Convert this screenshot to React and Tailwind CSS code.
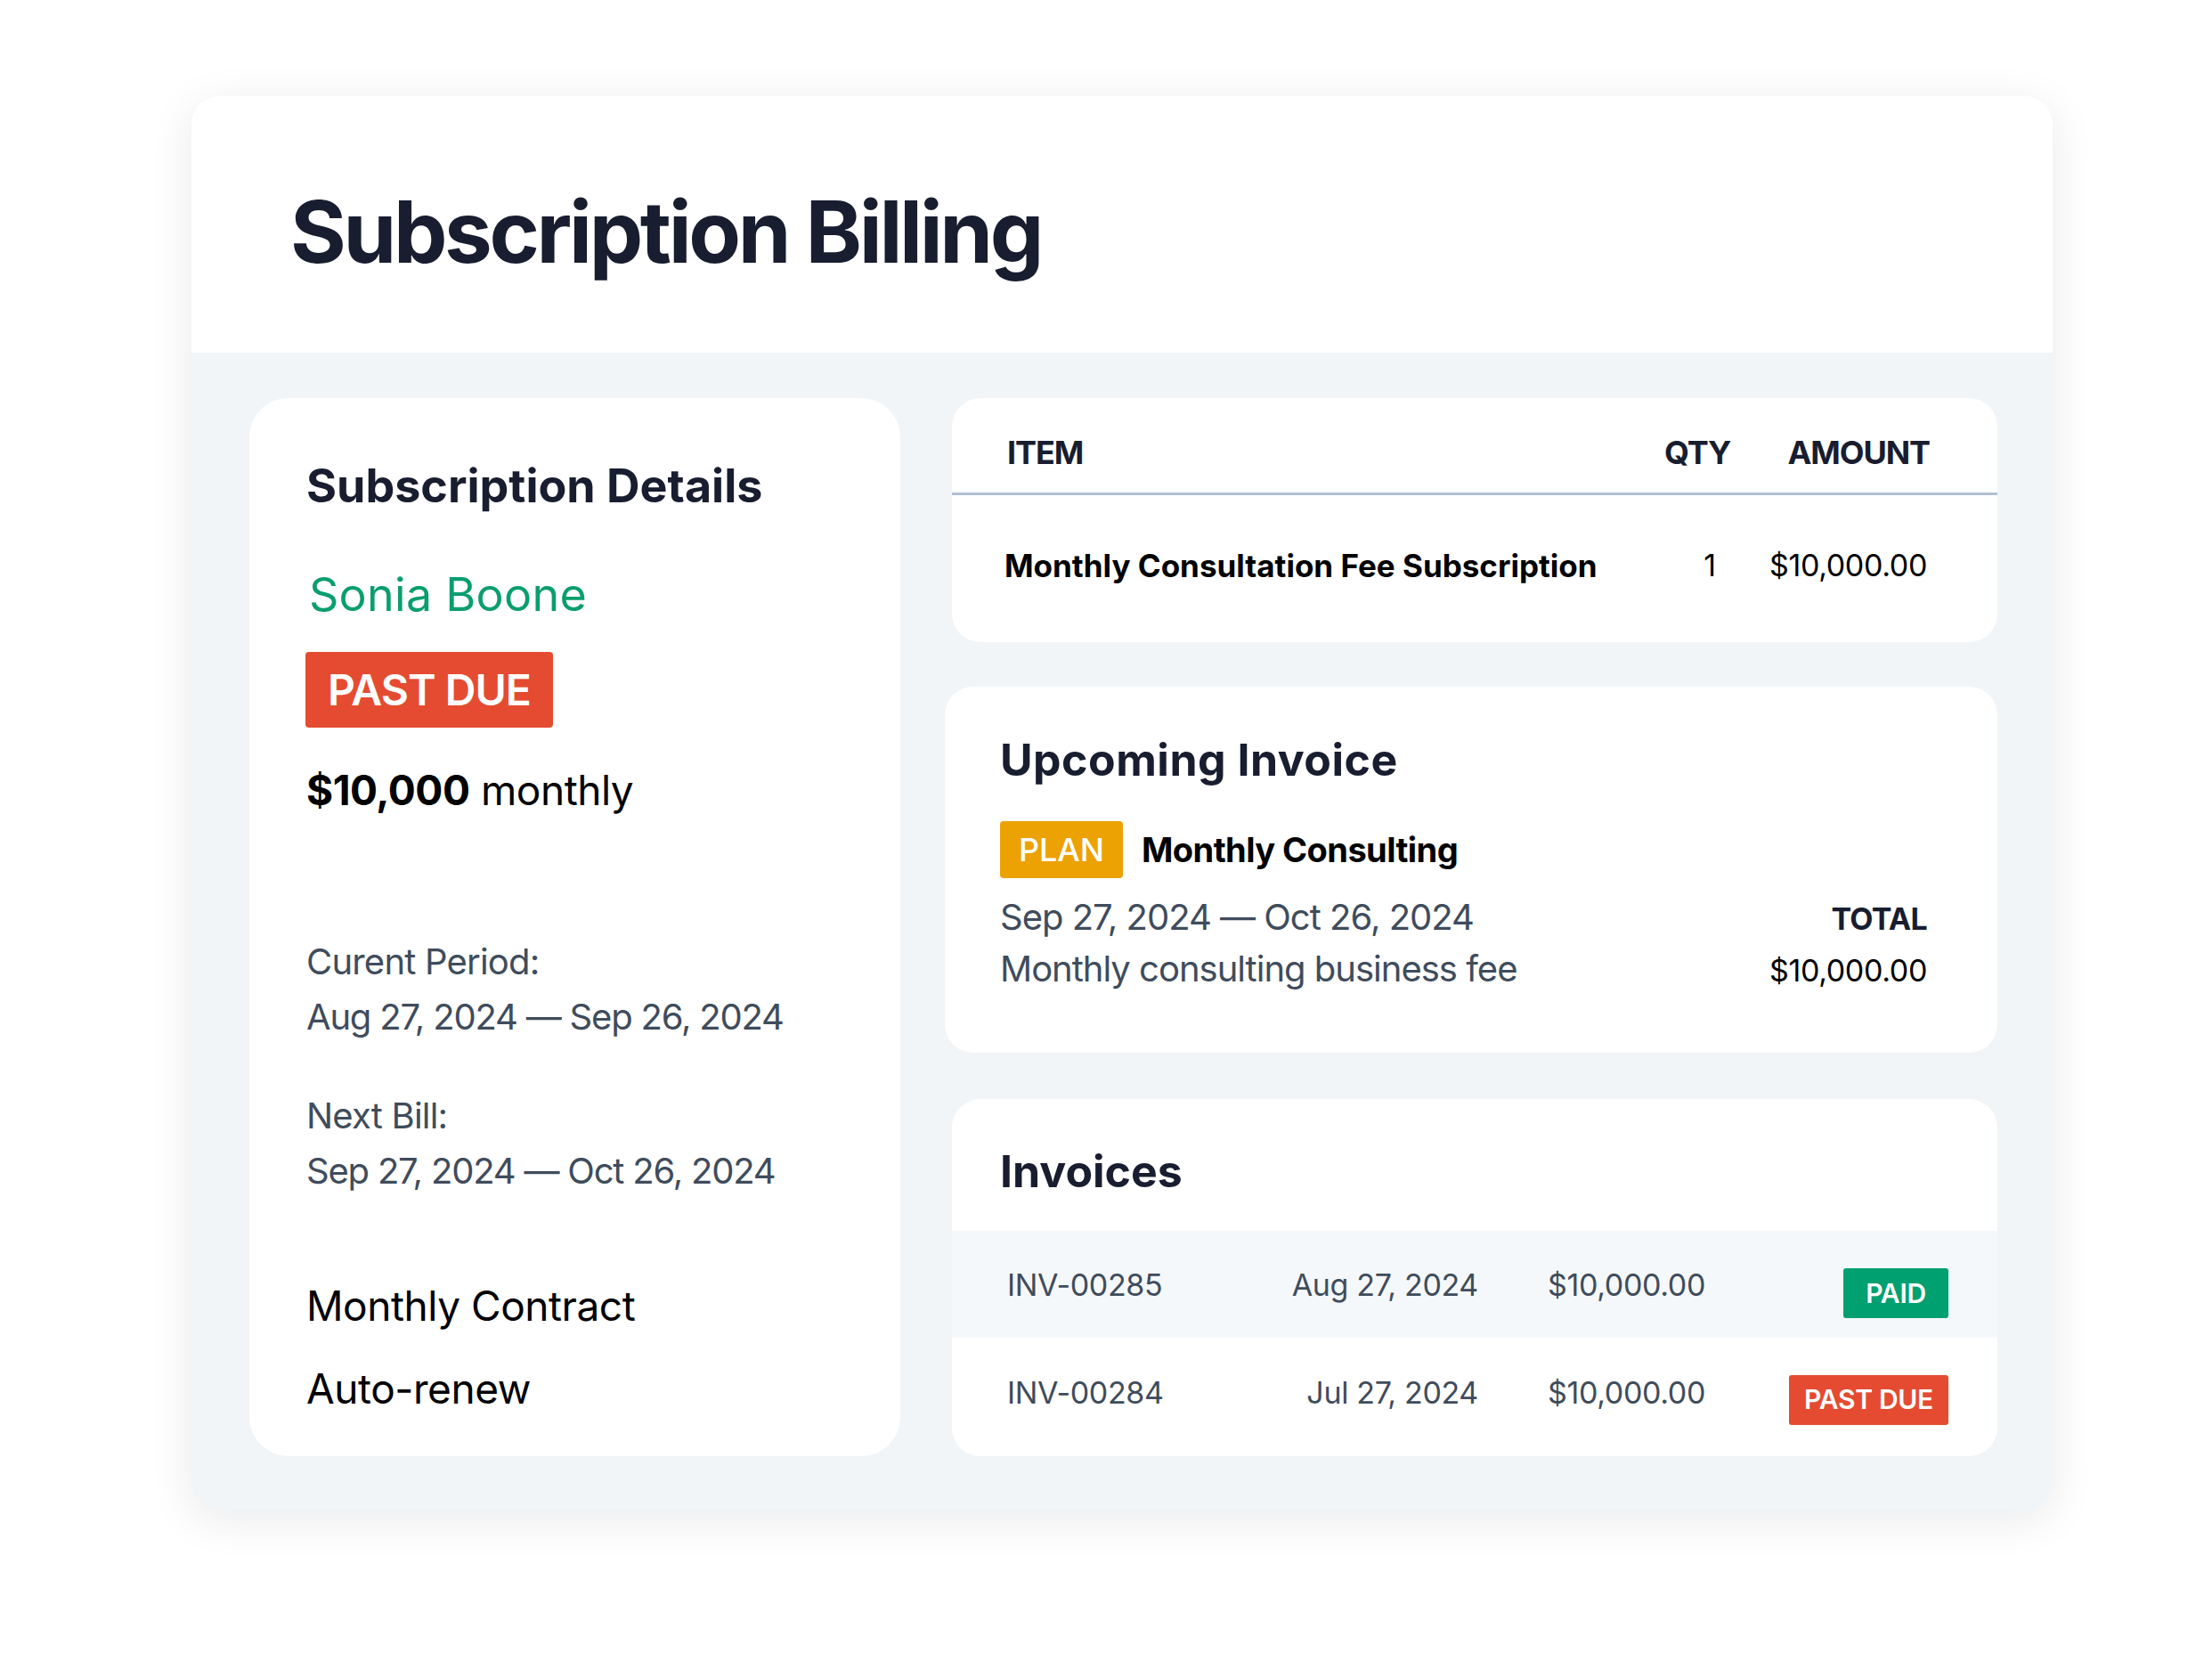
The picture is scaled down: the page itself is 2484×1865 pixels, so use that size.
export default function App() {
    return (
        <div className="min-h-[1865px] w-full bg-white font-['Inter',sans-serif] pt-[108px] pl-[215px]">
            <div className="w-[2090px] rounded-[32px] overflow-hidden shadow-[0_10px_50px_rgba(15,23,42,0.09)]">
                {/* Title */}
                <div className="h-[288px] bg-white pt-[104px] pl-[111px]">
                    <h1 className="text-[96px] leading-none font-bold tracking-[-0.035em] text-[#181d2f]">Subscription Billing</h1>
                </div>

                {/* Body */}
                <div className="bg-[#f1f5f8] pt-[51px] pb-[61px] pl-[65px] pr-[62px] flex gap-[58px]">
                    <SubscriptionDetails />
                    <div className="flex flex-col w-[1174px]">
                        <ItemsTable />
                        <UpcomingInvoice />
                        <Invoices />
                    </div>
                </div>
            </div>
        </div>
    );
}

function SubscriptionDetails() {
    return (
        <div className="w-[731px] h-[1188px] bg-white rounded-[44px] pl-[64px] pt-[73px]">
            <h2 className="text-[52px] leading-none font-bold text-[#181d2f]">Subscription Details</h2>
            <div className="mt-[70px] ml-[3px] text-[52px] leading-none text-[#0a9e6e] tracking-[0.005em]">Sonia Boone</div>
            <div className="mt-[38px] w-[278px] h-[85px] -ml-[1px] rounded-[4px] bg-[#e54b31] flex items-center justify-center text-[48px] font-semibold text-white tracking-[-0.02em]">
                PAST DUE
            </div>
            <div className="mt-[47px] text-[46px] leading-none text-black tracking-[-0.01em]">
                <span className="font-bold">$10,000</span> monthly
            </div>

            <div className="mt-[150px] text-[40px] leading-none text-[#3f4c5c] tracking-[-0.02em]">Curent Period:</div>
            <div className="mt-[22px] text-[40px] leading-none text-[#3f4c5c] tracking-[-0.03em]">Aug 27, 2024 — Sep 26, 2024</div>
            <div className="mt-[71px] text-[40px] leading-none text-[#3f4c5c] tracking-[-0.02em]">Next Bill:</div>
            <div className="mt-[22px] text-[40px] leading-none text-[#3f4c5c] tracking-[-0.03em]">Sep 27, 2024 — Oct 26, 2024</div>

            <div className="mt-[108px] text-[46px] leading-none text-black tracking-[-0.01em]">Monthly Contract</div>
            <div className="mt-[47px] text-[46px] leading-none text-black tracking-[-0.01em]">Auto-renew</div>
        </div>
    );
}

function ItemsTable() {
    return (
        <div className="h-[274px] bg-white rounded-[32px] overflow-hidden">
            <div className="h-[109px] pt-[43px] pl-[62px] pr-[76px] flex border-b-[3px] border-[#b0c0d3] text-[36px] leading-none font-bold tracking-[-0.03em] text-[#181d2f]">
                <div className="flex-1">ITEM</div>
                <div className="w-[71px]">QTY</div>
                <div className="w-[185px] ml-[42px] text-right">AMOUNT</div>
            </div>
            <div className="pt-[62px] pl-[59px] pr-[79px] flex text-[34px] leading-none text-black">
                <div className="flex-1 text-[35px] font-bold">Monthly Consultation Fee Subscription</div>
                <div className="w-[71px] text-right pr-[10px]">1</div>
                <div className="w-[185px] ml-[42px] text-right tracking-[-0.01em]">$10,000.00</div>
            </div>
        </div>
    );
}

function UpcomingInvoice() {
    return (
        <div className="mt-[50px] -ml-[8px] h-[411px] bg-white rounded-[32px] pt-[57px] pl-[62px] pr-[79px]">
            <h2 className="text-[50px] leading-none font-bold tracking-[0.01em] text-[#181d2f]">Upcoming Invoice</h2>
            <div className="mt-[44px] flex items-center gap-[21px]">
                <span className="w-[138px] h-[64px] rounded-[4px] bg-[#eba202] flex items-center justify-center text-[36px] font-medium text-white">PLAN</span>
                <span className="text-[38px] font-bold text-black tracking-[-0.015em]">Monthly Consulting</span>
            </div>
            <div className="flex justify-between">
                <div className="text-[40px] leading-none text-[#3f4c5c] tracking-[-0.025em]">
                    <div className="mt-[24px]">Sep 27, 2024 — Oct 26, 2024</div>
                    <div className="mt-[18px]">Monthly consulting business fee</div>
                </div>
                <div className="text-[34px] leading-none text-right">
                    <div className="mt-[29px] font-bold tracking-[-0.02em] text-[#181d2f]">TOTAL</div>
                    <div className="mt-[24px] text-black tracking-[-0.01em]">$10,000.00</div>
                </div>
            </div>
        </div>
    );
}

function Invoices() {
    const rows = [
        { id: "INV-00285", date: "Aug 27, 2024", amount: "$10,000.00", status: "PAID" },
        { id: "INV-00284", date: "Jul 27, 2024", amount: "$10,000.00", status: "PAST DUE" },
    ];
    return (
        <div className="mt-[52px] h-[401px] bg-white rounded-[32px] overflow-hidden">
            <h2 className="pt-[56px] pl-[54px] text-[50px] leading-none font-bold text-[#181d2f]">Invoices</h2>
            <div className="mt-[42px]">
                {rows.map((r, i) => (
                    <div
                        key={r.id}
                        className={`flex items-center pl-[62px] pr-[55px] text-[34px] text-[#3f4c5c] tracking-[-0.01em] ${i === 0 ? "h-[120px] bg-[#f5f8fa]" : "h-[133px] pb-[10px]"}`}
                    >
                        <div className="w-[230px]">{r.id}</div>
                        <div className="w-[299px] text-right">{r.date}</div>
                        <div className="flex-1 ml-[78px]">{r.amount}</div>
                        <span
                            className={`h-[56px] rounded-[3px] flex items-center justify-center text-[30px] font-semibold text-white tracking-[-0.01em] ${r.status === "PAID" ? "w-[118px] mt-[20px] bg-[#00a070]" : "w-[179px] mt-[16px] bg-[#e54b31]"}`}
                        >
                            {r.status}
                        </span>
                    </div>
                ))}
            </div>
        </div>
    );
}
